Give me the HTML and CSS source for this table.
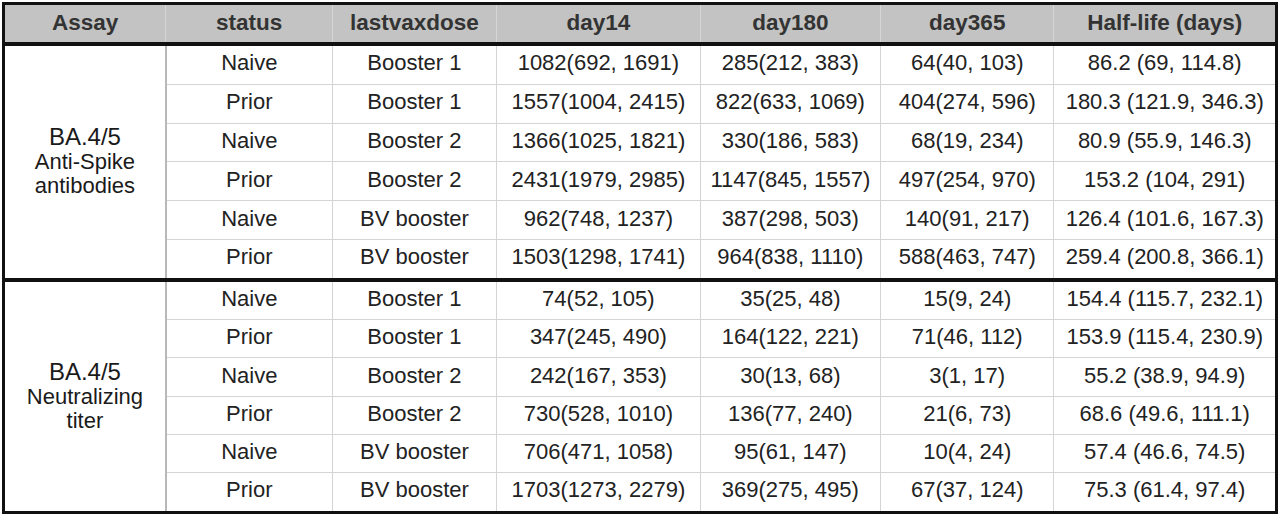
FILE: index.html
```html
<!DOCTYPE html>
<html lang="en">
<head>
<meta charset="utf-8">
<title>BA.4/5 antibody table</title>
<link rel="stylesheet" href="styles.css">
</head>
<body>
<div class="wrap">
<table class="data">
  <colgroup>
    <col class="c-assay"><col class="c-status"><col class="c-dose"><col class="c-d14"><col class="c-d180"><col class="c-d365"><col class="c-half">
  </colgroup>
  <thead>
    <tr><th>Assay</th><th>status</th><th>lastvaxdose</th><th>day14</th><th>day180</th><th>day365</th><th>Half-life (days)</th></tr>
  </thead>
  <tbody class="group">
    <tr><td class="assay" rowspan="6"><span class="big">BA.4/5</span><br>Anti-Spike<br>antibodies</td><td>Naive</td><td>Booster 1</td><td>1082(692, 1691)</td><td>285(212, 383)</td><td>64(40, 103)</td><td>86.2 (69, 114.8)</td></tr>
    <tr><td>Prior</td><td>Booster 1</td><td>1557(1004, 2415)</td><td>822(633, 1069)</td><td>404(274, 596)</td><td>180.3 (121.9, 346.3)</td></tr>
    <tr><td>Naive</td><td>Booster 2</td><td>1366(1025, 1821)</td><td>330(186, 583)</td><td>68(19, 234)</td><td>80.9 (55.9, 146.3)</td></tr>
    <tr><td>Prior</td><td>Booster 2</td><td>2431(1979, 2985)</td><td>1147(845, 1557)</td><td>497(254, 970)</td><td>153.2 (104, 291)</td></tr>
    <tr><td>Naive</td><td>BV booster</td><td>962(748, 1237)</td><td>387(298, 503)</td><td>140(91, 217)</td><td>126.4 (101.6, 167.3)</td></tr>
    <tr><td>Prior</td><td>BV booster</td><td>1503(1298, 1741)</td><td>964(838, 1110)</td><td>588(463, 747)</td><td>259.4 (200.8, 366.1)</td></tr>
  </tbody>
  <tbody class="group second">
    <tr><td class="assay" rowspan="6"><span class="big">BA.4/5</span><br>Neutralizing<br>titer</td><td>Naive</td><td>Booster 1</td><td>74(52, 105)</td><td>35(25, 48)</td><td>15(9, 24)</td><td>154.4 (115.7, 232.1)</td></tr>
    <tr><td>Prior</td><td>Booster 1</td><td>347(245, 490)</td><td>164(122, 221)</td><td>71(46, 112)</td><td>153.9 (115.4, 230.9)</td></tr>
    <tr><td>Naive</td><td>Booster 2</td><td>242(167, 353)</td><td>30(13, 68)</td><td>3(1, 17)</td><td>55.2 (38.9, 94.9)</td></tr>
    <tr><td>Prior</td><td>Booster 2</td><td>730(528, 1010)</td><td>136(77, 240)</td><td>21(6, 73)</td><td>68.6 (49.6, 111.1)</td></tr>
    <tr><td>Naive</td><td>BV booster</td><td>706(471, 1058)</td><td>95(61, 147)</td><td>10(4, 24)</td><td>57.4 (46.6, 74.5)</td></tr>
    <tr><td>Prior</td><td>BV booster</td><td>1703(1273, 2279)</td><td>369(275, 495)</td><td>67(37, 124)</td><td>75.3 (61.4, 97.4)</td></tr>
  </tbody>
</table>
</div>
</body>
</html>
```

FILE: styles.css
```css
html, body {
  margin: 0;
  padding: 0;
  background: #ffffff;
}

.wrap {
  padding: 2px 2px 0 2px;
}

.data {
  width: 1276px;
  border-collapse: collapse;
  table-layout: fixed;
  border: 3px solid #111111;
  font-family: "Liberation Sans", Arial, sans-serif;
  color: #222222;
}

.c-assay { width: 162px; }
.c-status { width: 166px; }
.c-dose { width: 164px; }
.c-d14 { width: 203px; }
.c-d180 { width: 180px; }
.c-d365 { width: 173px; }
.c-half { width: 222px; }

.data th {
  background: #c2c3c2;
  color: #333333;
  font-weight: bold;
  font-size: 22.5px;
  height: 35px;
  padding: 0 0 2px 0;
  text-align: center;
  vertical-align: middle;
  border-left: 1px solid #d6d6d6;
  border-bottom: 4px solid #111111;
}

.data th:first-child {
  border-left: none;
}

.data td {
  font-size: 22px;
  height: 34.8px;
  padding: 0 0 3px 0;
  text-align: center;
  vertical-align: middle;
  border: 1px solid #d4d4d4;
  white-space: nowrap;
}

.second td {
  height: 34.3px;
}

.data td.assay {
  padding: 0;
  border-right: 2px solid #b8b8b8;
  line-height: 24px;
  color: #1a1a1a;
}

.big {
  font-size: 24px;
}

.second tr:first-child td {
  border-top: 4px solid #111111;
}
```
